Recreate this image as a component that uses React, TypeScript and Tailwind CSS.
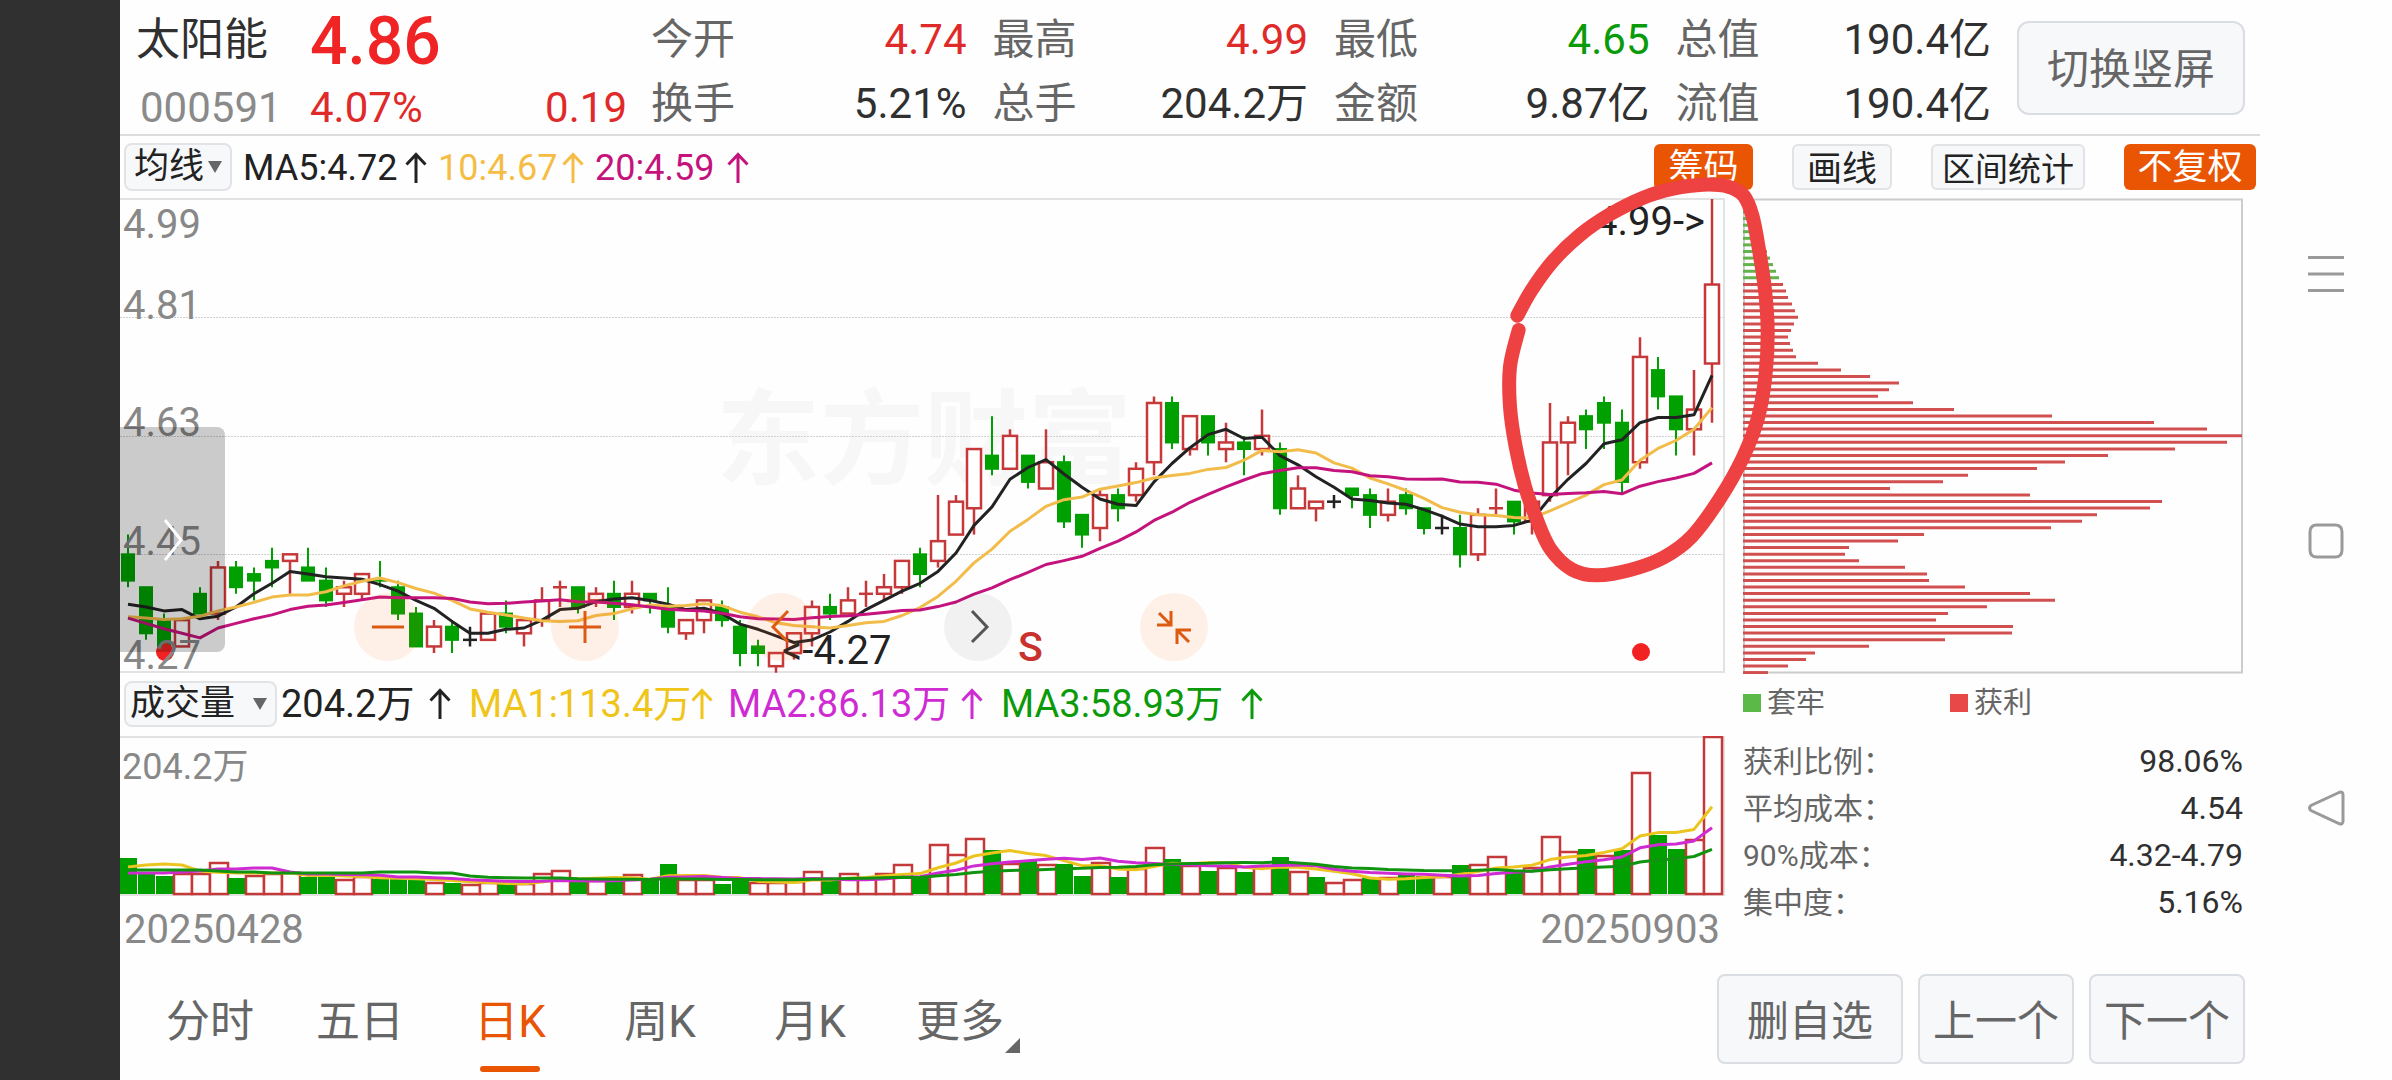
import React from "react";

type Tone = "r" | "g" | "k";
type Candle = [Tone, number, number, number, number];

// tone, high, body top, body bottom, low (prices in cents)
const candles: Candle[] = [
  ["g", 448, 445, 441, 440], ["g", 440, 440, 433, 432], ["g", 436, 435, 431, 431], ["r", 435, 435, 431, 431],
  ["g", 440, 439, 436, 436], ["r", 444, 443, 436, 435], ["g", 444, 443, 440, 439], ["g", 443, 442, 441, 438],
  ["g", 446, 444, 443, 440], ["r", 445, 445, 444, 439], ["g", 446, 443, 441, 441], ["g", 443, 441, 438, 437],
  ["r", 441, 440, 439, 437], ["r", 442, 442, 439, 438], ["g", 444, 441, 441, 440], ["g", 441, 440, 436, 435],
  ["g", 437, 436, 431, 431], ["r", 435, 434, 431, 430], ["g", 435, 434, 432, 430], ["k", 434, 432, 432, 431],
  ["r", 436, 436, 432, 432], ["g", 438, 436, 434, 433], ["r", 435, 435, 433, 431], ["r", 440, 438, 435, 434],
  ["r", 441, 440, 440, 437], ["g", 440, 440, 437, 436], ["r", 440, 439, 438, 437], ["g", 441, 439, 437, 435],
  ["r", 441, 439, 437, 436], ["g", 439, 439, 438, 436], ["g", 440, 437, 434, 433], ["r", 435, 435, 433, 432],
  ["r", 438, 438, 435, 433], ["g", 438, 437, 435, 434], ["g", 435, 434, 430, 428], ["g", 432, 431, 430, 428],
  ["r", 430, 430, 428, 427], ["r", 433, 433, 430, 429], ["r", 438, 437, 433, 431], ["g", 439, 437, 436, 435],
  ["r", 440, 438, 436, 436], ["r", 441, 439, 439, 437], ["r", 442, 440, 439, 438], ["r", 444, 444, 440, 439],
  ["g", 446, 445, 442, 440], ["r", 454, 447, 444, 443], ["r", 454, 453, 448, 448], ["r", 461, 461, 452, 448],
  ["g", 466, 460, 458, 457], ["r", 464, 463, 458, 458], ["g", 460, 460, 456, 455], ["r", 464, 459, 455, 455],
  ["g", 460, 459, 450, 449], ["g", 451, 451, 448, 446], ["r", 455, 454, 449, 447], ["g", 455, 454, 452, 450],
  ["r", 459, 458, 454, 453], ["r", 469, 468, 459, 457], ["g", 469, 468, 462, 461], ["r", 466, 466, 461, 460],
  ["g", 466, 466, 462, 460], ["r", 465, 462, 461, 459], ["g", 463, 462, 461, 457], ["r", 467, 463, 461, 460],
  ["g", 462, 461, 452, 451], ["r", 457, 455, 452, 452], ["r", 453, 453, 452, 450], ["k", 454, 453, 453, 452],
  ["g", 455, 455, 454, 452], ["g", 455, 454, 451, 449], ["r", 455, 453, 451, 450], ["g", 455, 454, 452, 451],
  ["g", 452, 452, 449, 448], ["k", 451, 449, 449, 448], ["g", 451, 449, 445, 443], ["r", 452, 451, 445, 444],
  ["r", 455, 452, 452, 451], ["g", 453, 453, 450, 448], ["r", 454, 453, 450, 448], ["r", 468, 462, 454, 453],
  ["r", 466, 465, 462, 457], ["g", 467, 466, 464, 461], ["g", 469, 468, 465, 461], ["g", 467, 465, 456, 454],
  ["r", 478, 475, 459, 458], ["g", 475, 473, 469, 467], ["g", 469, 469, 464, 460], ["r", 473, 467, 464, 460],
  ["r", 499, 486, 474, 465],
];

const volumes =
  "g36 g20 g18 r20 r20 r31 g16 r18 r20 r21 g17 g18 r14 r17 g15 g15 g15 r11 g11 r9 r11 g10 r10 r20 r23 g13 r13 g13 r19 g16 g30 r14 r14 g10 g14 r11 r11 r12 r22 g14 r20 r15 r20 r29 g18 r49 r39 r55 g44 r30 g34 r29 g30 g18 r31 g17 r25 r46 g35 r28 g23 r26 g22 r27 g37 r22 g17 r11 r14 g16 r16 g19 g18 r17 g29 r29 r37 g23 r26 r57 r42 g45 r38 g44 r121 g59 g45 r54 r157"
    .split(" ")
    .map((s) => ({ tone: s[0], h: Number(s.slice(1)) }));

const chips = [
  4, 6, 10, 13, 16, 21, 24, 27, 30, 33, 36, 40, 43, 45, 49, 52, 55, 51, 48, 45, 47, 50, 53, 75, 98, 127, 156, 146,
  135, 170, 211, 309, 411, 464, 499, 484, 432, 365, 322, 294, 225, 200, 147, 287, 419, 407, 354, 339, 308, 181, 155,
  106, 102, 116, 162, 184, 186, 222, 287, 312, 244, 205, 193, 270, 269, 202, 126, 72, 63, 45, 25,
];

const UP = "#c5393a";
const DOWN = "#00a000";
const FLAT = "#222222";

const xAt = (i: number) => 8 + 18 * i;
const yAt = (p: number) => 1 + (499 - p) * 6.58;

function average(values: number[], n: number, head: number[]) {
  return values.map((_, i) =>
    i < head.length ? head[i] : values.slice(Math.max(0, i - n + 1), i + 1).reduce((a, b) => a + b, 0) / Math.min(n, i + 1),
  );
}

const closes = candles.map(([t, , top, bottom]) => (t === "g" ? bottom : top));
const ma5 = average(closes, 5, [437.4, 437, 436.4, 436.6]);
const ma10 = average(closes, 10, [435.5, 435.3, 435.1, 435.2, 435.6, 436.4, 437, 437.7, 438.5]);
const ma20 = average(closes, 20, [
  435.3, 434.5, 433.7, 433, 432.3, 433.8, 434.5, 435.2, 435.8, 436.6, 437.1, 437.3, 437.7, 438.1, 438.5, 438.4, 438.4,
  438.4, 438.3,
]);
const vols = volumes.map((v) => v.h);
const vma5 = average(vols, 5, [27, 29, 30, 29]);
const vma10 = average(vols, 10, [21, 21, 21, 22, 23, 25, 25, 26, 26]);
const vma20 = average(vols, 20, [24, 24, 24, 24, 24, 23, 22, 22, 21, 21, 21, 21, 21, 21, 22, 22, 22, 21, 21]);

const line = (ys: number[]) => ys.map((y, i) => `${xAt(i)},${y.toFixed(1)}`).join(" ");

// Centre line of the hand-drawn loop, in thirds of a pixel
const loop = [
  [412, 407], [455, 330], [520, 242], [600, 165], [690, 103], [790, 53], [880, 26], [970, 14], [1045, 20], [1092, 48],
  [1118, 110], [1138, 215], [1155, 330], [1163, 450], [1157, 580], [1135, 710], [1090, 830], [1020, 955], [935, 1070],
  [850, 1133], [750, 1170], [650, 1186], [575, 1168], [510, 1105], [467, 1010], [435, 920], [407, 800], [390, 680],
  [390, 560], [416, 450],
];

function smooth(points: number[][]) {
  let d = `M${points[0][0]} ${points[0][1]}`;
  for (let i = 0; i < points.length - 1; i++) {
    const a = points[Math.max(0, i - 1)];
    const b = points[i];
    const c = points[i + 1];
    const e = points[Math.min(points.length - 1, i + 2)];
    d += `C${b[0] + (c[0] - a[0]) / 6} ${b[1] + (c[1] - a[1]) / 6} ${c[0] - (e[0] - b[0]) / 6} ${c[1] - (e[1] - b[1]) / 6} ${c[0]} ${c[1]}`;
  }
  return d;
}

function UpArrow() {
  return (
    <svg viewBox="0 0 22 32" className="h-8 w-[22px] shrink-0" fill="none" stroke="currentColor" strokeWidth="3" aria-hidden="true">
      <path d="M11 31V3M1.5 12.500 11 2.500l9.500 10" />
    </svg>
  );
}

function Caret() {
  return (
    <svg viewBox="0 0 14 12" className="h-3 w-[14px] shrink-0 fill-[#666]" aria-hidden="true">
      <path d="M0 0h14L7 12z" />
    </svg>
  );
}

function Reading({ text, className }: { text: string; className: string }) {
  return (
    <span className={`flex items-center justify-between whitespace-nowrap ${className}`}>
      {text}
      <UpArrow />
    </span>
  );
}

const quotes = [
  { label: "今开", value: "4.74", color: "text-[#e02a2a]" },
  { label: "最高", value: "4.99", color: "text-[#e02a2a]" },
  { label: "最低", value: "4.65", color: "text-[#0a9a0a]" },
  { label: "总值", value: "190.4亿", color: "text-[#303030]" },
  { label: "换手", value: "5.21%", color: "text-[#303030]" },
  { label: "总手", value: "204.2万", color: "text-[#303030]" },
  { label: "金额", value: "9.87亿", color: "text-[#303030]" },
  { label: "流值", value: "190.4亿", color: "text-[#303030]" },
];

function Header() {
  return (
    <header className="flex h-[136px] border-b-2 border-[#dcdcdc] pr-[15px] text-[42px] leading-[64px]">
      <div className="grid w-[531px] shrink-0 grid-cols-[174px_1fr] content-start pr-6 pt-[8px] pl-4">
        <h1 className="text-[44px] text-[#303030]">太阳能</h1>
        <strong className="pt-0.5 text-[66px] font-medium text-[#f02424]">4.86</strong>
        <span className="pl-1 pt-0.5 text-[#8a8a8a]">000591</span>
        <span className="flex justify-between pt-0.5 text-[#e02a2a]">
          <span>4.07%</span>
          <span>0.19</span>
        </span>
      </div>
      <dl className="grid flex-1 grid-cols-4 content-start gap-x-[26px] pt-[8px]">
        {quotes.map((q) => (
          <div key={q.label} className="flex justify-between whitespace-nowrap">
            <dt className="text-[#666]">{q.label}</dt>
            <dd className={q.color}>{q.value}</dd>
          </div>
        ))}
      </dl>
      <button className="mt-[21px] ml-[26px] h-[94px] w-[228px] shrink-0 rounded-xl border-2 border-[#dadde2] bg-[#f7f8fa] pt-1 text-[#666]">
        切换竖屏
      </button>
    </header>
  );
}

function PriceChart() {
  return (
    <svg viewBox="0 0 1606 476" className="block h-auto w-full" role="img" aria-label="日K线图">
      <text x="596" y="279" fontSize="104" fontWeight="700" fill="#f7f7f7">
        东方财富
      </text>
      <path d="M0 119.500H1604M0 238.500H1604M0 356.500H1604" stroke="#d0d0d0" strokeDasharray="2 1" />
      <path d="M0 1H1604V474H0" fill="none" stroke="#e2e2e2" strokeWidth="2" />
      {candles.map(([tone, high, top, bottom, low], i) => {
        const x = xAt(i);
        const color = tone === "r" ? UP : tone === "g" ? DOWN : FLAT;
        const height = yAt(bottom) - yAt(top);
        return (
          <g key={i} stroke={color} strokeWidth={tone === "g" ? 2 : 2.5}>
            <path d={`M${x} ${yAt(high)}V${yAt(top)}M${x} ${yAt(bottom)}V${yAt(low)}`} />
            {height < 1 ? (
              <path d={`M${x - 7} ${yAt(top)}h14`} />
            ) : (
              <rect x={x - (tone === "r" ? 7 : 6)} y={yAt(top)} width={tone === "r" ? 14 : 12} height={height} fill={tone === "r" ? "#fff" : color} />
            )}
          </g>
        );
      })}
      <g fill="none" strokeWidth="3" strokeLinejoin="round">
        <polyline points={line(ma5.map(yAt))} stroke="#222" />
        <polyline points={line(ma10.map(yAt))} stroke="#f2bc4b" />
        <polyline points={line(ma20.map(yAt))} stroke="#c4137c" />
      </g>
      <circle cx="45" cy="454" r="9" fill="#f32222" />
      <circle cx="1521" cy="454" r="9" fill="#f32222" />
      <g fontSize="40" fill="#888">
        <text x="3" y="40">4.99</text>
        <text x="3" y="121">4.81</text>
        <text x="3" y="238">4.63</text>
        <text x="3" y="357">4.45</text>
        <text x="3" y="471">4.27</text>
      </g>
      <g fontSize="40" fill="#222">
        <text x="1475" y="37">4.99-&gt;</text>
        <text x="662" y="466">&lt;-4.27</text>
      </g>
      <text x="898" y="463" fontSize="41" fontWeight="500" fill="#c8322f">S</text>
    </svg>
  );
}

const controls = [
  { label: "缩小", d: "M18 34h32", gray: false },
  { label: "放大", d: "M18 34h32M34 18v32", gray: false },
  { label: "左移", d: "M41 18 26 34l15 15", gray: false },
  { label: "右移", d: "M28 18l15 16-15 15", gray: true },
  { label: "收起", d: "M19 20 31 32M17 32h14V18M49 49 37 37M51 37H37v14", gray: false },
];

function ChartControls() {
  return (
    <>
      <button aria-label="展开侧栏" className="absolute top-[229px] left-0 flex h-[225px] w-[105px] items-center rounded-r-lg bg-black/20 pl-10">
        <svg viewBox="0 0 24 44" className="h-11 w-6" fill="none" stroke="#fff" strokeWidth="3" aria-hidden="true">
          <path d="M5 2l16 20L5 42" />
        </svg>
      </button>
      <div className="absolute bottom-[13px] left-[234px] flex w-[854px] justify-between">
        {controls.map((c) => (
          <button
            key={c.label}
            aria-label={c.label}
            className={`size-[68px] rounded-full ${c.gray ? "bg-black/5 text-[#555]" : "bg-[#ff5a00]/9 text-[#dd5a12]"}`}
          >
            <svg viewBox="0 0 68 68" className="size-full" fill="none" stroke="currentColor" strokeWidth="3" aria-hidden="true">
              <path d={c.d} />
            </svg>
          </button>
        ))}
      </div>
    </>
  );
}

function ChipChart() {
  return (
    <svg viewBox="0 0 500 476" className="block h-auto w-full" role="img" aria-label="筹码分布">
      <rect x="1" y="1.500" width="498" height="473" fill="none" stroke="#cccccc" strokeWidth="2" />
      {chips.map((w, i) => (
        <path key={i} d={`M0 ${(14 + i * 6.58).toFixed(1)}h${w}`} stroke={i < 11 ? "#62b34c" : "#d14f4f"} strokeWidth="3" />
      ))}
    </svg>
  );
}

function VolumeChart() {
  return (
    <svg viewBox="0 0 1606 160" className="block h-auto w-full" role="img" aria-label="成交量图">
      <path d="M0 1H1604V159H0" fill="none" stroke="#e2e2e2" strokeWidth="2" />
      {volumes.map((v, i) =>
        v.tone === "g" ? (
          <rect key={i} x={xAt(i) - 8} y={158 - v.h} width="17" height={v.h} fill={DOWN} />
        ) : (
          <rect key={i} x={xAt(i) - 8} y={158 - v.h} width="18" height={v.h} fill="#fff" stroke={UP} strokeWidth="2.500" />
        ),
      )}
      <g fill="none" strokeWidth="3" strokeLinejoin="round">
        <polyline points={line(vma5.map((v) => 158 - v))} stroke="#ecc420" />
        <polyline points={line(vma10.map((v) => 158 - v))} stroke="#cf2bd2" />
        <polyline points={line(vma20.map((v) => 158 - v))} stroke="#109410" />
      </g>
      <text x="2" y="43" fontSize="36" fill="#888">204.2万</text>
    </svg>
  );
}

const costs = [
  ["获利比例：", "98.06%"],
  ["平均成本：", "4.54"],
  ["90%成本：", "4.32-4.79"],
  ["集中度：", "5.16%"],
];

const tabs = ["分时", "五日", "日K", "周K", "月K", "更多"];

export default function App() {
  return (
    <div className="flex min-h-screen bg-[#fefefe] [font-family:Roboto,'Noto_Sans_CJK_SC',sans-serif]">
      <div className="w-[120px] shrink-0 bg-[#303030]" />
      <main className="flex min-w-0 flex-1 flex-col">
        <Header />

        <div className="flex h-[62px] items-center justify-between pr-1 pl-1 text-[35px] leading-[44px]">
          <div className="flex items-center gap-[11px] text-[36px]">
            <button className="flex h-12 w-[108px] items-center justify-center gap-1 rounded-lg border-2 border-[#e1e3e7] bg-[#f7f8fa] text-[35px] text-[#222]">
              均线
              <Caret />
            </button>
            <Reading text="MA5:4.72" className="w-[184px] pt-0.5 text-[#222]" />
            <Reading text="10:4.67" className="w-[146px] pt-0.5 text-[#f5bd45]" />
            <Reading text="20:4.59" className="w-[154px] pt-0.5 text-[#c4137c]" />
          </div>
          <div className="flex items-center gap-[39px]">
            <button className="h-[46px] w-[99px] rounded-md bg-[#ea5504] pt-0.5 text-white">筹码</button>
            <button className="h-[46px] w-[100px] rounded-md border-2 border-[#e1e3e7] bg-[#f7f8fa] pt-0.5 text-[#222]">画线</button>
            <button className="h-[46px] w-[154px] rounded-md border-2 border-[#e1e3e7] bg-[#f7f8fa] pt-0.5 text-[33px] text-[#222]">区间统计</button>
            <button className="h-[46px] w-[132px] rounded-md bg-[#ea5504] pt-0.5 text-white">不复权</button>
          </div>
        </div>

        <section className="relative flex gap-[17px] pr-[17px]">
          <div className="min-w-0 flex-[1606]">
            <div className="relative">
              <PriceChart />
              <ChartControls />
            </div>
            <div className="flex h-[62px] items-center gap-[18px] pb-0.5 pl-1 text-[38px] leading-[44px]">
              <div className="flex items-center gap-1">
                <button className="flex h-[46px] w-[153px] items-center justify-between rounded-lg border-2 border-[#e1e3e7] bg-[#f7f8fa] pr-2 pl-1 text-[35px] text-[#222]">
                  成交量
                  <Caret />
                </button>
                <Reading text="204.2万" className="w-[170px] text-[#222]" />
              </div>
              <Reading text="MA1:113.4万" className="w-[241px] text-[#f0c419]" />
              <Reading text="MA2:86.13万" className="w-[255px] text-[#cf2bd2]" />
              <Reading text="MA3:58.93万" className="w-[262px] text-[#0a9a0a]" />
            </div>
            <VolumeChart />
            <div className="flex justify-between pt-1 pr-[6px] pl-1 text-[40px] leading-[60px] text-[#888]">
              <span>20250428</span>
              <span>20250903</span>
            </div>
          </div>

          <aside className="min-w-0 flex-[500] text-[30px]">
            <ChipChart />
            <div className="flex h-[58px] items-center gap-[125px] leading-[40px] text-[#666]">
              <span className="flex items-center gap-1.5 text-[29px]">
                <i className="size-[18px] bg-[#5bb947]" />
                套牢
              </span>
              <span className="flex items-center gap-1.5 text-[29px]">
                <i className="size-[18px] bg-[#e84848]" />
                获利
              </span>
            </div>
            <dl className="pt-[6px] leading-[47px]">
              {costs.map(([label, value]) => (
                <div key={label} className="flex justify-between">
                  <dt className="text-[#666]">{label}</dt>
                  <dd className="text-[32px] text-[#303030]">{value}</dd>
                </div>
              ))}
            </dl>
          </aside>

          <svg viewBox="0 0 2140 762" preserveAspectRatio="xMinYMin" className="pointer-events-none absolute inset-0 z-10 h-full w-full overflow-visible" aria-hidden="true">
            <g transform="translate(1260 -18) scale(0.33333)">
              <path d={smooth(loop)} fill="none" stroke="#ee4141" strokeWidth="42" strokeLinecap="round" strokeLinejoin="round" />
            </g>
          </svg>
        </section>

        <footer className="flex items-start justify-between pt-[14px] pr-[15px] pl-[15px]">
          <nav className="flex pt-1 text-[44px] leading-[88px] text-[#666]">
            {tabs.map((t) => (
              <button key={t} className={`flex w-[150px] flex-col items-center ${t === "日K" ? "text-[#ea5504]" : ""}`}>
                <span className="flex items-end">
                  {t}
                  {t === "更多" && (
                    <svg viewBox="0 0 15 15" className="mb-[13px] -mr-4 ml-px size-[15px] fill-[#666]" aria-hidden="true">
                      <path d="M15 0v15H0z" />
                    </svg>
                  )}
                </span>
                {t === "日K" && <span className="h-1.5 w-[60px] rounded-full bg-[#ea5504]" />}
              </button>
            ))}
          </nav>
          <div className="flex gap-[15px] text-[42px] text-[#666]">
            <button className="h-[90px] w-[186px] rounded-lg border-2 border-[#dadde2] bg-[#f7f8fa] pt-1">删自选</button>
            <button className="h-[90px] w-[156px] rounded-lg border-2 border-[#dadde2] bg-[#f7f8fa] pt-1">上一个</button>
            <button className="h-[90px] w-[156px] rounded-lg border-2 border-[#dadde2] bg-[#f7f8fa] pt-1">下一个</button>
          </div>
        </footer>
      </main>

      <nav className="flex w-[132px] shrink-0 flex-col items-center justify-between pt-[254px] pb-[252px]" aria-label="系统导航">
        {[
          ["最近任务", "M2 3.500h36M2 20h36M2 36.500h36"],
          ["主屏幕", "M11 4h18q7 0 7 7v18q0 7-7 7H11q-7 0-7-7V11q0-7 7-7z"],
          ["返回", "M33 4.500 5 17.500q-3 2.500 0 5L33 35.500q4 1.500 4-2.500V7q0-4-4-2.500z"],
        ].map(([label, d]) => (
          <button key={label} aria-label={label} className="size-10">
            <svg viewBox="0 0 40 40" className="size-10" fill="none" stroke="#9a9a9a" strokeWidth="3" aria-hidden="true">
              <path d={d} />
            </svg>
          </button>
        ))}
      </nav>
    </div>
  );
}
